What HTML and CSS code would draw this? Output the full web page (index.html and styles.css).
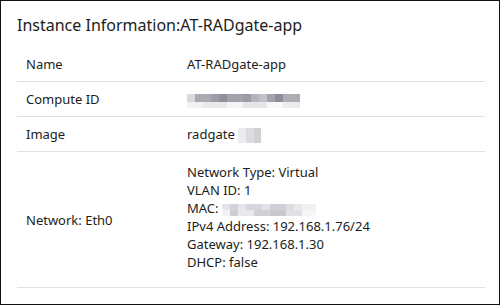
FILE: index.html
```html
<!DOCTYPE html>
<html lang="en">
<head>
    <meta charset="UTF-8">
    <title>Instance Information</title>
    <link rel="stylesheet" href="styles.css">
</head>
<body>
    <div class="panel">
        <h3 class="panel-title">Instance Information:AT-RADgate-app</h3>
        <table class="info-table">
            <tr>
                <td class="label">Name</td>
                <td>AT-RADgate-app</td>
            </tr>
            <tr>
                <td class="label">Compute ID</td>
                <td><span class="masked masked-id"></span></td>
            </tr>
            <tr>
                <td class="label">Image</td>
                <td>radgate <span class="masked masked-image"></span></td>
            </tr>
            <tr>
                <td class="label">Network: Eth0</td>
                <td class="network">
                    <div>Network Type: Virtual</div>
                    <div>VLAN ID: 1</div>
                    <div>MAC: <span class="masked masked-mac"></span></div>
                    <div>IPv4 Address: 192.168.1.76/24</div>
                    <div>Gateway: 192.168.1.30</div>
                    <div>DHCP: false</div>
                </td>
            </tr>
        </table>
    </div>
</body>
</html>
```

FILE: styles.css
```css
body {
    margin: 0;
    background-color: #fff;
    font-family: "Noto Sans", "Open Sans", sans-serif;
    color: #1b1d20;
}
.panel {
    width: 466px;
    height: 290px;
    padding: 13px 16px 0 16px;
    border: 1px solid #111;
    background-color: #fff;
}
.panel-title {
    margin: 0 0 11px 0;
    font-size: 16px;
    font-weight: normal;
    line-height: 22px;
}
.info-table {
    width: 468px;
    border-collapse: collapse;
    font-size: 13px;
}
.info-table td {
    height: 34px;
    padding: 0;
    border-bottom: 1px solid #e0e1e7;
    vertical-align: middle;
    line-height: 18px;
}
.info-table td.label {
    width: 161px;
    padding-left: 9px;
}
.info-table td.network {
    padding: 11px 0 16px 0;
    line-height: 18px;
}
.masked {
    display: inline-block;
    vertical-align: middle;
}
.masked-id {
    width: 113px;
    height: 14px;
    background:
        linear-gradient(to right, #d9d9dd 0 8px, #a9aab2 8px 24px, #9c9da6 24px 32px, #8f909a 32px 40px, #a1a2aa 40px 56px, #9a9ba4 56px 64px, #b3b4bb 64px 72px, #c2c3c9 72px 80px, #a2a3ab 80px 88px, #8c8d96 88px 96px, #adaeb5 96px 113px) top / 100% 8px no-repeat,
        linear-gradient(to right, #f2f2f4 0 16px, #e9e9ec 16px 40px, #f4f4f6 40px 56px, #e6e6ea 56px 80px, #f7f7f8 80px 96px, #ececef 96px 113px) bottom / 100% 6px no-repeat;
}
.masked-image {
    width: 23px;
    height: 15px;
    background: linear-gradient(to right, #ececef 0 8px, #dcdce0 8px 16px, #d0d0d5 16px 23px);
}
.masked-mac {
    width: 94px;
    height: 12px;
    background:
        linear-gradient(to right, #e4e4e8 0 8px, #d3d3d9 8px 16px, #e6e6ea 16px 24px, #d6d6dc 24px 40px, #e2e2e6 40px 48px, #cfd0d6 48px 64px, #dcdce1 64px 72px, #e8e8ec 72px 80px, #f0f0f2 80px 94px) top / 100% 6px no-repeat,
        linear-gradient(to right, #f3f3f5 0 8px, #cdced4 8px 16px, #e9e9ed 16px 32px, #d0d1d7 32px 48px, #c8c9cf 48px 64px, #e0e0e5 64px 80px, #f6f6f7 80px 94px) bottom / 100% 6px no-repeat;
}
```
